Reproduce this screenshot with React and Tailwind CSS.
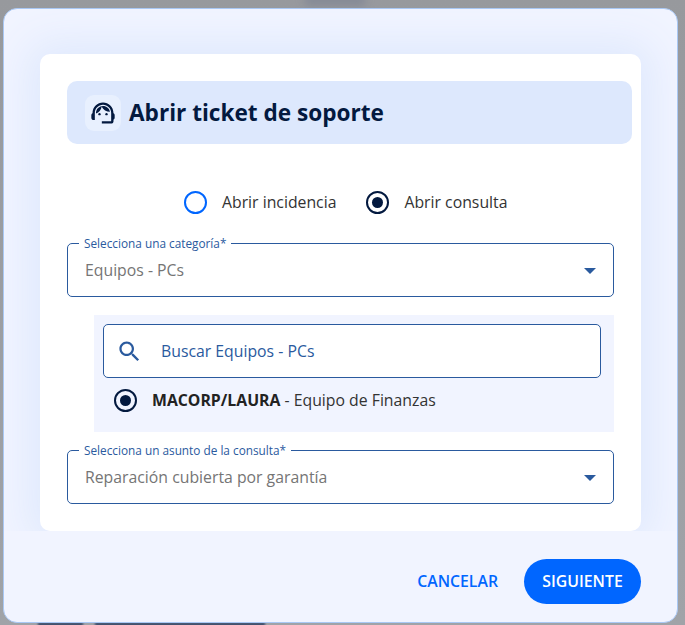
import React from 'react'

const font = { fontFamily: '"Open Sans", sans-serif' }

function Radio({ checked }) {
    return checked ? (
        <span className="w-[23px] h-[23px] rounded-full border-[2.5px] border-[#03193f] flex items-center justify-center shrink-0">
            <span className="w-[11px] h-[11px] rounded-full bg-[#03193f]" />
        </span>
    ) : (
        <span className="w-[23px] h-[23px] rounded-full border-[2.5px] border-[#0066ff] shrink-0" />
    )
}

function SelectField({ label, value }) {
    return (
        <fieldset className="h-[59px] w-[547px] border border-[#2a5a9e] rounded-[5px] pl-[11px] pr-[17px] flex items-center justify-between relative">
            <legend className="px-[5px] ml-0 text-[11.8px] leading-[11px] text-[#2a5a9e]">{label}</legend>
            <span className="text-[15.8px] leading-[22px] text-[#757575] pl-[6px] -mt-[5px]">{value}</span>
            <span className="absolute right-[17px] top-[19px] w-0 h-0 border-l-[6px] border-r-[6px] border-t-[6px] border-l-transparent border-r-transparent border-t-[#2a5a9e]" />
        </fieldset>
    )
}

function SupportIcon() {
    return (
        <svg width="28" height="28" viewBox="0 0 24 24" fill="#03193f">
            <path d="M21 12.22C21 6.73 16.74 3 12 3c-4.69 0-9 3.65-9 9.28-.6.34-1 .98-1 1.72v2c0 1.1.9 2 2 2h1v-6.1c0-3.87 3.13-7 7-7s7 3.13 7 7V19h-8v2h8c1.1 0 2-.9 2-2v-1.22c.59-.31 1-.92 1-1.63v-2.3c0-.7-.41-1.31-1-1.63z" />
            <circle cx="9" cy="13" r="1" />
            <circle cx="15" cy="13" r="1" />
            <path d="M18 11.03C17.52 8.18 15.04 6 12.05 6c-3.03 0-6.29 2.51-6.03 6.45 2.47-1.01 4.33-3.21 4.86-5.89 1.31 2.63 4 4.44 7.12 4.47z" />
        </svg>
    )
}

function SearchIcon() {
    return (
        <svg width="27" height="27" viewBox="0 0 24 24" fill="#2a5a9e">
            <path d="M15.5 14h-.79l-.28-.27C15.41 12.59 16 11.11 16 9.5 16 5.91 13.09 3 9.5 3S3 5.91 3 9.5 5.91 16 9.5 16c1.61 0 3.09-.59 4.23-1.57l.27.28v.79l5 4.99L20.49 19l-4.99-5zm-6 0C7.01 14 5 11.99 5 9.5S7.01 5 9.5 5 14 7.01 14 9.5 11.99 14 9.5 14z" />
        </svg>
    )
}

export default function App() {
    return (
        <div style={font} className="relative w-[685px] h-[625px] overflow-hidden bg-gradient-to-b from-[#97999d] to-[#a0a3a8] pt-[8px] pl-[3px]">
            {/* blurred page behind the dialog */}
            <div className="absolute left-[305px] -top-[6px] w-[60px] h-[12px] bg-[#858a96] blur-[4px]" />
            <div className="absolute left-[38px] top-[622px] w-[45px] h-[6px] bg-[#42526f] blur-[1px]" />
            <div className="absolute left-[95px] top-[622px] w-[170px] h-[6px] bg-[#42526f] blur-[1px]" />

            <div className="relative w-[675px] h-[615px] rounded-[14px] border border-[#a9c8f5] bg-[#f1f4ff] overflow-hidden flex flex-col">
                <div className="h-[522px] shrink-0 overflow-hidden pt-[45px] pl-[36px]">
                    <div className="w-[601px] h-[477px] bg-white rounded-[10px] shadow-[0_0_40px_12px_#dfe9fd] pt-[27px] pl-[27px]">
                        <div className="w-[565px] h-[63px] bg-[#dde8fd] rounded-[10px] flex items-center pl-[18px] gap-[8px]">
                            <span className="w-[36px] h-[36px] rounded-[9px] bg-[#e8f0fe] flex items-center justify-center">
                                <SupportIcon />
                            </span>
                            <h1 className="text-[22.6px] leading-[30px] font-bold text-[#03193f]">Abrir ticket de soporte</h1>
                        </div>

                        <div className="flex items-center mt-[46px] pl-[117px] h-[24px]">
                            <Radio />
                            <span className="ml-[15px] pt-[1px] text-[15.8px] text-[#333333]">Abrir incidencia</span>
                            <span className="ml-[30px]"><Radio checked /></span>
                            <span className="ml-[15px] pt-[1px] text-[15.8px] text-[#333333]">Abrir consulta</span>
                        </div>

                        <div className="mt-[24px]">
                            <SelectField label="Selecciona una categoría*" value="Equipos - PCs" />
                        </div>

                        <div className="w-[520px] h-[117px] ml-[27px] mt-[18px] bg-[#f1f4ff] pt-[9px] px-[9px]">
                            <div className="w-[498px] h-[54px] bg-white border border-[#2a5a9e] rounded-[5px] flex items-center pl-[12px]">
                                <SearchIcon />
                                <span className="ml-[18px] pt-[2px] text-[15.8px] text-[#2a5a9e]">Buscar Equipos - PCs</span>
                            </div>
                            <div className="flex items-center mt-[10px] pl-[11px]">
                                <Radio checked />
                                <span className="ml-[15px] pt-[1px] text-[15.8px] text-[#333333]">
                                    <b className="font-bold text-[#222222]">MACORP/LAURA</b> - Equipo de Finanzas
                                </span>
                            </div>
                        </div>

                        <div className="mt-[13px]">
                            <SelectField label="Selecciona un asunto de la consulta*" value="Reparación cubierta por garantía" />
                        </div>
                    </div>
                </div>

                <div className="flex-1 flex items-center justify-end pr-[36px] pt-[9px] gap-[26px]">
                    <span className="pt-[2px] text-[15.8px] font-semibold text-[#0066ff]">CANCELAR</span>
                    <span className="w-[117px] h-[45px] pt-[2px] rounded-full bg-[#0066ff] flex items-center justify-center text-[15.8px] font-semibold text-white">SIGUIENTE</span>
                </div>
            </div>
        </div>
    )
}
